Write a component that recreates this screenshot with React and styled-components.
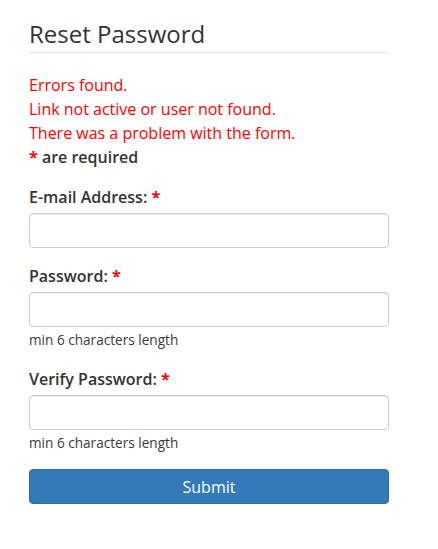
import React from "react";
import styled, { createGlobalStyle } from "styled-components";

const Global = createGlobalStyle`
  html, body { margin: 0; padding: 0; background: #fff; }
  body { font-family: "Open Sans", "Liberation Sans", sans-serif; color: #333; }
  * { box-sizing: border-box; }
`;

const Page = styled.div`
  width: 360px;
  margin-left: 29px;
  padding-top: 17px;
  display: flex;
  flex-direction: column;
`;

const Title = styled.h2`
  margin: 0;
  font-size: 24px;
  font-weight: 400;
  line-height: 34px;
  padding-bottom: 1px;
  border-bottom: 1px solid #e5e5e5;
  color: #333;
`;

const Messages = styled.div`
  margin-top: 20px;
  display: flex;
  flex-direction: column;
  font-size: 16px;
  line-height: 24px;
`;

const Error = styled.div`
  color: #ff0000;
`;

const Required = styled.div`
  font-weight: 600;
  color: #333;
`;

const Star = styled.span`
  color: #ff0000;
  font-weight: 700;
`;

const Form = styled.form`
  margin-top: 16px;
  display: flex;
  flex-direction: column;
`;

const Field = styled.div`
  display: flex;
  flex-direction: column;
  margin-bottom: ${(p) => (p.$hint ? "18px" : "16px")};
`;

const Label = styled.label`
  font-size: 16px;
  font-weight: 600;
  line-height: 24px;
  margin-bottom: 4px;
`;

const Input = styled.input`
  height: 35px;
  width: 100%;
  border: 1px solid #ccc;
  border-radius: 4px;
  box-shadow: inset 0 1px 1px rgba(0, 0, 0, 0.075);
  font-size: 14px;
  padding: 6px 12px;
  font-family: inherit;
`;

const Hint = styled.div`
  font-size: 13.6px;
  line-height: 18px;
  margin-top: 4px;
  color: #3a3a3a;
`;

const Button = styled.button`
  margin-top: -1px;
  height: 35px;
  width: 100%;
  background: #337ab7;
  border: 1px solid #2e6da4;
  border-radius: 4px;
  color: #fff;
  font-family: inherit;
  font-size: 16px;
  cursor: pointer;
`;

export default function App() {
  return (
    <>
      <Global />
      <Page>
        <Title>Reset Password</Title>
        <Messages>
          <Error>Errors found.</Error>
          <Error>Link not active or user not found.</Error>
          <Error>There was a problem with the form.</Error>
          <Required>
            <Star>*</Star> are required
          </Required>
        </Messages>
        <Form onSubmit={(e) => e.preventDefault()}>
          <Field>
            <Label>
              E-mail Address: <Star>*</Star>
            </Label>
            <Input type="email" />
          </Field>
          <Field $hint>
            <Label>
              Password: <Star>*</Star>
            </Label>
            <Input type="password" />
            <Hint>min 6 characters length</Hint>
          </Field>
          <Field $hint>
            <Label>
              Verify Password: <Star>*</Star>
            </Label>
            <Input type="password" />
            <Hint>min 6 characters length</Hint>
          </Field>
          <Button type="submit">Submit</Button>
        </Form>
      </Page>
    </>
  );
}
